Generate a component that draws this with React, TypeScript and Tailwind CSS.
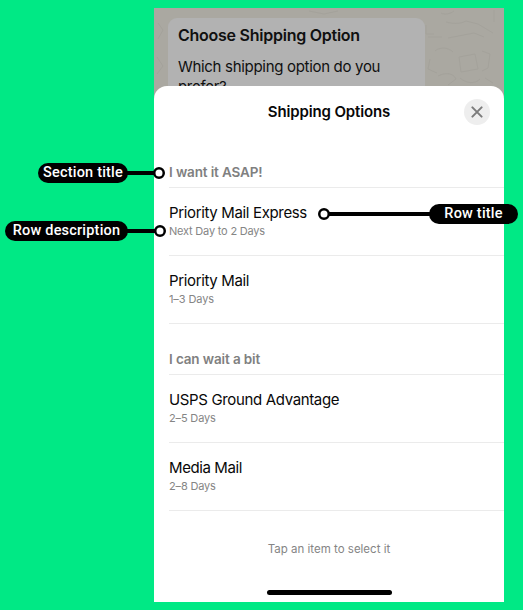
import { clsx } from 'clsx';

interface ShippingRow {
  title: string;
  description: string;
  titleClass: string;
  descriptionClass: string;
}

interface ShippingSection {
  title: string;
  titleClass: string;
  rows: ShippingRow[];
}

const sections: ShippingSection[] = [
  {
    title: 'I want it ASAP!',
    titleClass: 'tracking-[-0.13px]',
    rows: [
      { title: 'Priority Mail Express', description: 'Next Day to 2 Days', titleClass: 'tracking-[-0.35px]', descriptionClass: 'tracking-[-0.2px]' },
      { title: 'Priority Mail', description: '1–3 Days', titleClass: 'tracking-[-0.35px]', descriptionClass: 'tracking-[-0.1px]' },
    ],
  },
  {
    title: 'I can wait a bit',
    titleClass: 'tracking-[-0.13px]',
    rows: [
      { title: 'USPS Ground Advantage', description: '2–5 Days', titleClass: 'tracking-[-0.35px]', descriptionClass: 'tracking-[-0.16px]' },
      { title: 'Media Mail', description: '2–8 Days', titleClass: 'tracking-[-0.4px]', descriptionClass: 'tracking-[-0.16px]' },
    ],
  },
];

function ChatBackdrop() {
  return (
    <div className="relative h-[98px] shrink-0 overflow-hidden bg-[#aaa8a1]">
      {/* Wallpaper doodles */}
      <svg className="absolute inset-0" width="350" height="98" fill="none" stroke="#a4a29b" strokeWidth="1">
        <path d="M272 17v9h8M274 29h14M292 14c8 2 14 2 20-1l12 3 15 9M294 30l26-5 10 4M281 43c6-5 14-3 18 1M305 49l16-3 3 15-17 3zM328 43l8 3-2 14-6 3M276 51l-2 10 9 4M284 68c8-4 15-3 18 3l-8 6M306 70c7 6 15 6 20 1M331 70l8 5M340 2v12M300 3c-4 3-9 4-13 2M4 15l5 7-5 9M3 49l6 9-6 8M155 3l15 3 14-3" />
      </svg>
      <div className="relative ml-[14px] mt-[10px] h-[100px] w-[257px] rounded-[9px] bg-[#b2b2b2] px-[10px] pt-[6px] text-[#101010]">
        <div className="whitespace-nowrap text-[16px] font-semibold leading-[22px] tracking-[-0.25px]">Choose Shipping Option</div>
        <div className="mt-[11px] whitespace-nowrap text-[15px] leading-[20px] tracking-[-0.31px]">
          Which shipping option do you
          <br />
          prefer?
        </div>
      </div>
    </div>
  );
}

function SectionList() {
  return (
    <div className="pl-[15px]">
      {sections.map((section) => (
        <div key={section.title}>
          <div className="h-[51px] border-b border-[#ebebeb] pt-[25px]">
            <div className={clsx('text-[13.5px] font-semibold leading-[20px] text-[#808080]', section.titleClass)}>{section.title}</div>
          </div>
          {section.rows.map((row) => (
            <div key={row.title} className="h-[68px] border-b border-[#ebebeb] pt-[15px]">
              <div className={clsx('text-[15px] leading-[20px] text-[#080808]', row.titleClass)}>{row.title}</div>
              <div className={clsx('mt-px text-[11px] leading-[14px] text-[#858585]', row.descriptionClass)}>{row.description}</div>
            </div>
          ))}
        </div>
      ))}
    </div>
  );
}

function Dot() {
  return (
    <svg className="shrink-0" width="12" height="12" viewBox="0 0 12 12" fill="white" stroke="black" strokeWidth="2.5">
      <circle cx="6" cy="6" r="4.75" />
    </svg>
  );
}

interface CalloutProps {
  label: string;
  className: string;
  pillClass: string;
  dotRight?: boolean;
}

function Callout({ label, className, pillClass, dotRight }: CalloutProps) {
  return (
    <div className={clsx('absolute flex h-[20px] items-center', dotRight ? 'flex-row' : 'flex-row-reverse', className)}>
      <span
        className={clsx(
          'flex h-[20px] shrink-0 items-center justify-center whitespace-nowrap rounded-full bg-black font-["Roboto",sans-serif] text-[14.5px] font-medium leading-[20px] text-white',
          pillClass,
        )}
      >
        {label}
      </span>
      <span className="-mx-px h-[4px] flex-1 bg-black" />
      <Dot />
    </div>
  );
}

export default function App() {
  return (
    <div className='relative flex h-[610px] w-[523px] overflow-hidden bg-[#00e985] pl-[154px] pt-[8px] font-["Inter",sans-serif]'>
      <div className="flex h-[594px] w-[350px] flex-col overflow-hidden bg-white">
        <ChatBackdrop />

        {/* Bottom sheet */}
        <div className="relative -mt-[20px] flex flex-1 flex-col rounded-t-[13px] bg-white">
          <div className="grid h-[51px] grid-cols-[1fr_auto_1fr] items-center px-[14px]">
            <span />
            <span className="pt-px text-[15px] font-semibold leading-[20px] tracking-[-0.13px] text-[#080808]">Shipping Options</span>
            <button className="flex size-[26px] items-center justify-center justify-self-end rounded-full bg-[#eeeeee]" aria-label="Close">
              <svg width="12" height="12" viewBox="0 0 12 12" fill="none" stroke="#7b7b7b" strokeWidth="2" strokeLinecap="round">
                <path d="M1.4 1.4l9.2 9.2M10.6 1.4l-9.2 9.2" />
              </svg>
            </button>
          </div>
          <SectionList />
          <div className="mt-[30px] text-center text-[11.5px] leading-[17px] text-[#858585]">Tap an item to select it</div>
          <div className="mx-auto mb-[7px] mt-auto h-[5px] w-[125px] rounded-full bg-black" />
        </div>
      </div>

      <Callout label="Section title" className="left-[38px] top-[163px] w-[127px]" pillClass="w-[90px] tracking-[0.2px]" dotRight />
      <Callout label="Row description" className="left-[5px] top-[221px] w-[161px]" pillClass="w-[123px] tracking-[0.2px]" dotRight />
      <Callout label="Row title" className="left-[318px] top-[204px] w-[200px]" pillClass="w-[89px] tracking-[0.2px]" />
    </div>
  );
}
